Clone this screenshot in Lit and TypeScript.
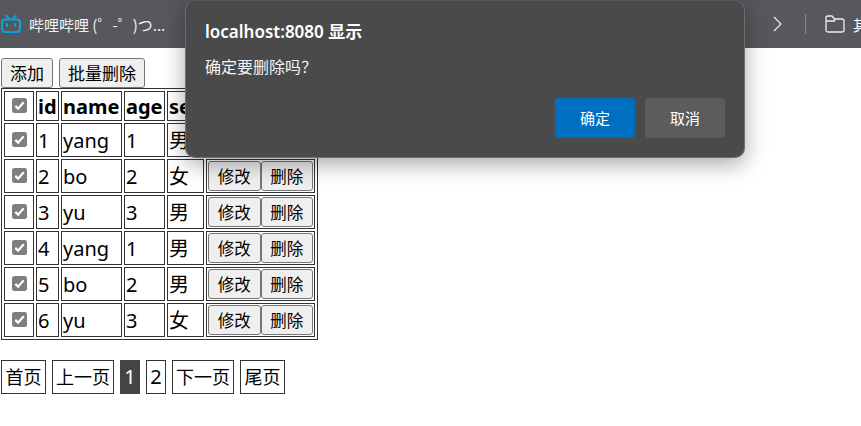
import { LitElement, html, css } from "lit";
import { customElement } from "lit/decorators.js";

const rows = [
  [1, "yang", 1, "男"],
  [2, "bo", 2, "女"],
  [3, "yu", 3, "男"],
  [4, "yang", 1, "男"],
  [5, "bo", 2, "男"],
  [6, "yu", 3, "女"],
];

const check = html`<svg class="cb" width="15" height="15" viewBox="0 0 15 15"><rect x="0" y="0" width="15" height="15" rx="2.5" fill="#7f7f7f"/><path d="M3.3 7.9 6.1 10.7 11.7 4.3" fill="none" stroke="#fff" stroke-width="2.2"/></svg>`;

@customElement("app-root")
export class AppRoot extends LitElement {
  static styles = css`
    :host { display: block; width: 861px; height: 426px; position: relative; overflow: hidden; background: #fff;
      font-family: "Noto Sans", "Noto Sans CJK SC", sans-serif; color: #000; }
    .bar { height: 48px; background: #57585e; display: flex; align-items: center; color: #fff; box-sizing: border-box; padding-left: 1px; }
    .tab { display: flex; align-items: center; gap: 8px; }
    .tabtext { font-family: "Noto Sans CJK SC", sans-serif; font-size: 15px; color: #f2f2f2; }
    .right { margin-left: auto; display: flex; align-items: center; }
    .sep { width: 1px; height: 20px; background: #85868a; margin: 0 19px 0 23px; }
    .bm { margin-left: 8px; margin-right: -7px; font-size: 15px; font-family: "Noto Sans CJK SC", sans-serif; }
    .page { padding: 10px 0 0 1px; }
    .tools { display: flex; gap: 6px; height: 30px; }
    button { font-family: "Noto Sans CJK SC", sans-serif; font-size: 16.5px; box-sizing: border-box; background: #efefef; border: 1px solid #767676; border-radius: 3px; padding: 0; color: #000; line-height: 1; }
    .tools button { height: 30px; font-size: 17px; padding-bottom: 1px; }
    .add { width: 52px; }
    .batch { width: 86px; }
    table { border: 1px solid #333; border-spacing: 2px; border-collapse: separate; font-size: 20px; table-layout: fixed; width: 317px; }
    td, th { border: 1px solid #333; padding: 2px 1px 0; text-align: left; box-sizing: border-box; height: 34px; line-height: 1; white-space: nowrap; overflow: hidden; }
    th { font-weight: 700; height: 30px; }
    .c { text-align: center; padding: 0; }
    .cb { display: block; margin: -1px auto 0; }
    td.ops { padding: 1px; }
    .ops div { display: flex; height: 30px; }
    .ops button { height: 30px; flex: 1 1 0; }
    .pager { display: flex; gap: 6px; margin-top: 20px; height: 34px; font-family: "Noto Sans CJK SC", sans-serif; font-size: 18px; }
    .pager span { border: 1px solid #333; box-sizing: border-box; display: flex; align-items: center; justify-content: center; height: 34px; padding-bottom: 2px; }
    .pager .num { font-family: "Noto Sans", sans-serif; font-size: 20px; width: 20px; }
    .pager .on { background: #444; border-color: #444; color: #fff; }
    .dialog { position: absolute; left: 185px; top: 0; width: 560px; height: 158px; box-sizing: border-box; background: #4a4a4a; border: 1px solid #6f6f6f; border-top-color: #5a5a5a; border-radius: 10px; box-shadow: 0 6px 22px rgba(0,0,0,.35); color: #fff; padding: 19px 19px 0; display: flex; flex-direction: column; font-family: "Noto Sans", "Noto Sans CJK SC", sans-serif; }
    .title { font-size: 17px; font-weight: 600; line-height: 24px; height: 24px; }
    .msg { font-family: "Noto Sans CJK SC", sans-serif; font-size: 16px; line-height: 20px; margin-top: 12px; color: #f4f4f4; }
    .actions { display: flex; justify-content: flex-end; gap: 10px; margin-top: 22px; }
    .actions button { width: 80px; height: 40px; border: 0; border-radius: 4px; color: #fff; font-size: 15px; padding-bottom: 1px; }
    .ok { background: #006fc2; }
    .cancel { background: #5c5c5c; }
  `;

  render() {
    return html`
      <div class="bar">
        <div class="tab">
          <svg width="20" height="18" viewBox="0 0 20 18" fill="none" stroke="#00a7dc" stroke-width="2">
            <path d="M5.5 1 8 3.5M14.5 1 12 3.5" stroke-linecap="round"/>
            <rect x="1" y="4.5" width="18" height="12.5" rx="3"/>
            <path d="M6 9v2M14 9v2" stroke-linecap="round"/>
          </svg>
          <span class="tabtext">哔哩哔哩 (゜-゜)つ...</span>
        </div>
        <div class="right">
          <svg width="9" height="16" viewBox="0 0 9 16" fill="none" stroke="#e8e8e8" stroke-width="1.3"><path d="M1 1 8 8 1 15"/></svg>
          <div class="sep"></div>
          <svg width="20" height="18" viewBox="0 0 20 18" fill="none" stroke="#eee" stroke-width="1.3"><path d="M1 15V3a2 2 0 0 1 2-2h4l2.5 3H17a2 2 0 0 1 2 2v9a2 2 0 0 1-2 2H3a2 2 0 0 1-2-2zM1 6h8.5V4"/></svg>
          <span class="bm">其</span>
        </div>
      </div>
      <div class="page">
        <div class="tools"><button class="add">添加</button><button class="batch">批量删除</button></div>
        <table>
          <colgroup><col style="width:30px"/><col style="width:23px"/><col style="width:61px"/><col style="width:41px"/><col style="width:37px"/><col style="width:109px"/></colgroup>
          <thead><tr><th class="c">${check}</th><th>id</th><th>name</th><th>age</th><th>sex</th><th>操作</th></tr></thead>
          <tbody>
            ${rows.map(r => html`<tr>
              <td class="c">${check}</td><td>${r[0]}</td><td>${r[1]}</td><td>${r[2]}</td><td>${r[3]}</td>
              <td class="ops"><div><button>修改</button><button>删除</button></div></td>
            </tr>`)}
          </tbody>
        </table>
        <div class="pager">
          <span style="width:45px">首页</span><span style="width:62px">上一页</span><span class="num on">1</span><span class="num">2</span><span style="width:62px">下一页</span><span style="width:45px">尾页</span>
        </div>
      </div>
      <div class="dialog">
        <div class="title">localhost:8080 显示</div>
        <div class="msg">确定要删除吗？</div>
        <div class="actions"><button class="ok">确定</button><button class="cancel">取消</button></div>
      </div>
    `;
  }
}
